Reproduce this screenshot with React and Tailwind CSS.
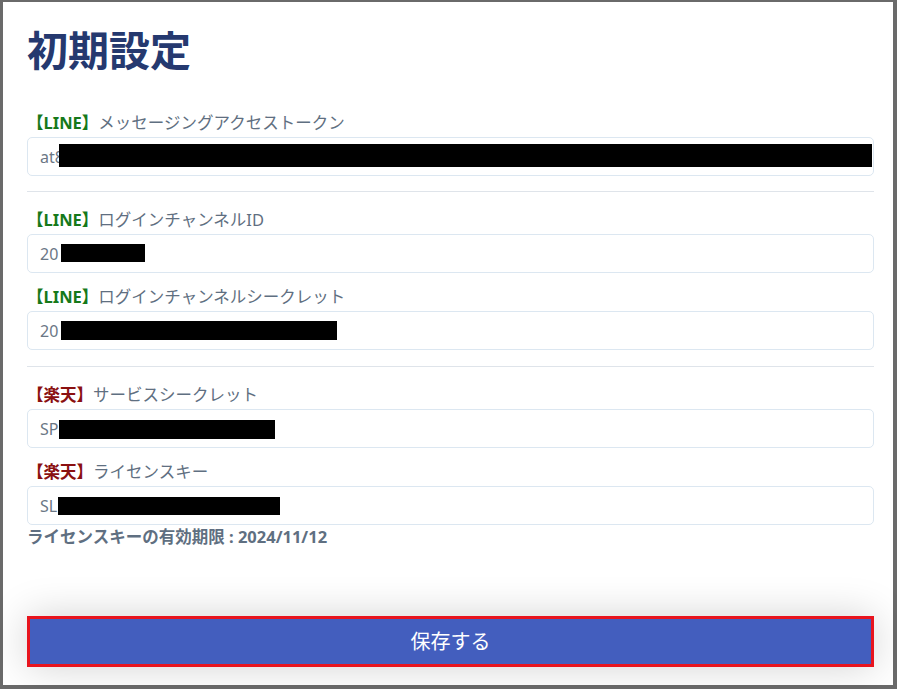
import React from "react";

const font = { fontFamily: '"Noto Sans", "Noto Sans CJK JP", sans-serif' };

function Field({ tag, tagColor, label, prefix, bar, className = "" }) {
  return (
    <div className={className}>
      <div className="h-[24px] flex items-center text-[16.5px] leading-[24px] text-[#5f6f81]">
        <span className={`font-bold ${tagColor}`}>{tag}</span>
        <span>{label}</span>
      </div>
      <div className="relative mt-[2px] h-[39px] rounded-[5px] border border-[#dce7f1] bg-white px-[12px] flex items-center text-[16px] text-[#6b7785]">
        <span>{prefix}</span>
        <span
          className="absolute bg-black"
          style={{ left: bar[0], top: bar[1], width: bar[2], height: bar[3] }}
        />
      </div>
    </div>
  );
}

export default function App() {
  return (
    <div
      className="w-[897px] h-[689px] bg-white border-l-[3px] border-t-[2px] border-r-[4px] border-b-[4px] border-[#6a6a6a] flex flex-col"
      style={font}
    >
      <div className="pl-[24px] pr-[19px] flex flex-col">
        <h1 className="mt-[22px] h-[52px] flex items-center text-[41px] font-bold leading-[52px] text-[#25396f]">
          初期設定
        </h1>
        <Field
          className="mt-[35px]"
          tag="【LINE】"
          tagColor="text-[#16791a]"
          label="メッセージングアクセストークン"
          prefix="at8"
          bar={[31, 6, 813, 23]}
        />
        <div className="mt-[15px] h-px bg-[#dfe4ea]" />
        <Field
          className="mt-[16px]"
          tag="【LINE】"
          tagColor="text-[#16791a]"
          label="ログインチャンネルID"
          prefix="20"
          bar={[33, 9, 84, 18]}
        />
        <Field
          className="mt-[12px]"
          tag="【LINE】"
          tagColor="text-[#16791a]"
          label="ログインチャンネルシークレット"
          prefix="20"
          bar={[33, 9, 276, 19]}
        />
        <div className="mt-[16px] h-px bg-[#dfe4ea]" />
        <Field
          className="mt-[16px]"
          tag="【楽天】"
          tagColor="text-[#8a1010]"
          label="サービスシークレット"
          prefix="SP"
          bar={[31, 10, 216, 19]}
        />
        <Field
          className="mt-[12px]"
          tag="【楽天】"
          tagColor="text-[#8a1010]"
          label="ライセンスキー"
          prefix="SL"
          bar={[30, 10, 222, 18]}
        />
        <div className="h-[24px] leading-[24px] text-[16.5px] font-bold text-[#5f6f81]">
          ライセンスキーの有効期限 : 2024/11/12
        </div>
      </div>
      <div className="mt-auto pl-[24px] pr-[19px] pb-[18px]">
        <button className="w-full h-[51px] bg-[#435ebe] border-[3px] border-[#e8141e] text-white text-[20px] shadow-[0_0_40px_rgba(0,0,0,0.18)]">
          保存する
        </button>
      </div>
    </div>
  );
}
